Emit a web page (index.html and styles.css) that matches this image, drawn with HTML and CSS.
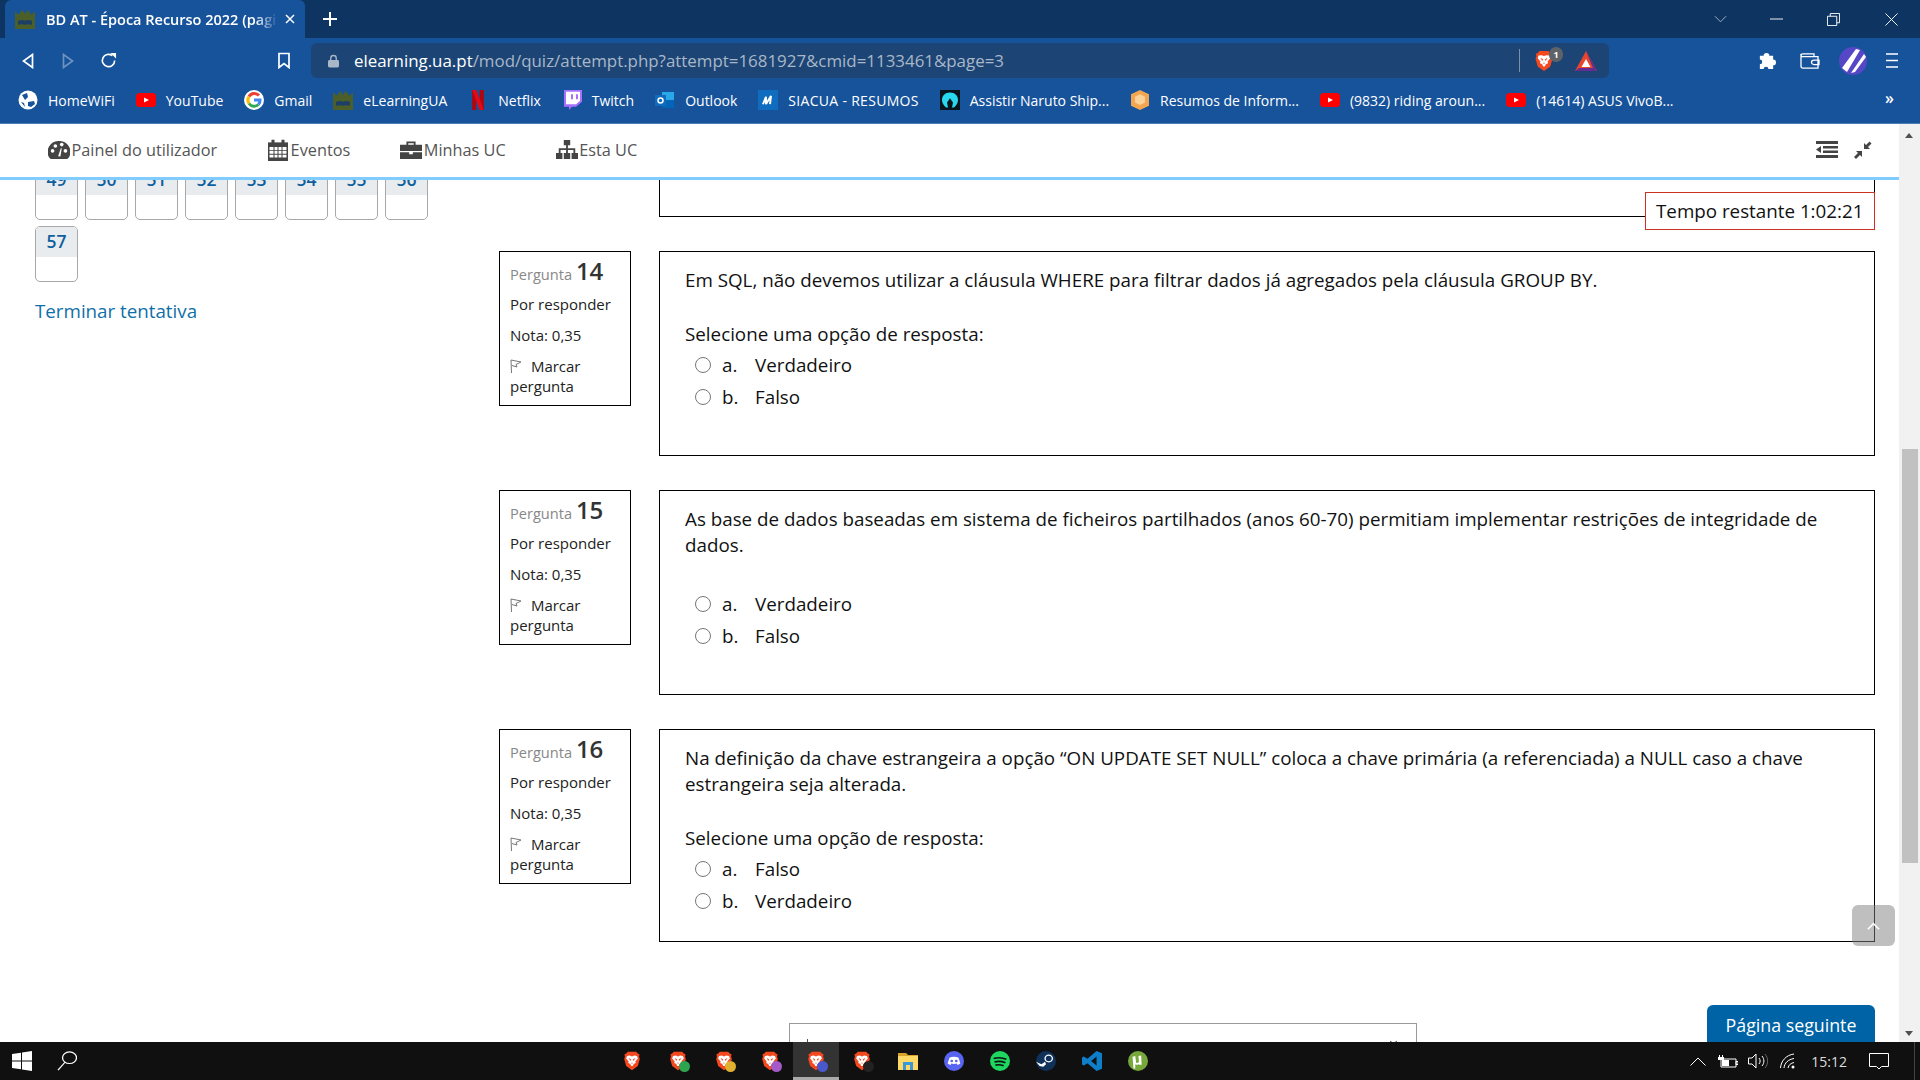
FILE: index.html
```html
<!DOCTYPE html>
<html lang="pt">

<head>
    <meta charset="UTF-8">
    <title>BD AT - Época Recurso 2022</title>
    <link rel="stylesheet" href="styles.css">
</head>

<body>
    <svg class="defs" width="0" height="0">
        <defs>
            <symbol id="brave" viewBox="0 0 20 24">
                <path fill="#f4481f" d="M5 1h10l2 2 2 1-.5 3 .9 2.500-2.400 8.500-7 5-7-5L.6 9.500 1.500 7 1 4l2-1z" />
                <path fill="#fff" d="M4 6l3.500-.5L10 6.500l2.500-1L16 6l1 3-3 3.500.5 2-2.500 1-1 2.500h-2l-1-2.500-2.500-1 .5-2L3 9z" />
                <path fill="#f4481f" d="M6 8.500l3 1.500-1 2zM14 8.500l-3 1.500 1 2zM9 14h2l-1 1.500z" />
            </symbol>
            <symbol id="yt" viewBox="0 0 20 14">
                <rect width="20" height="14" rx="3.500" fill="#f00" />
                <path fill="#fff" d="M8 4.500l5 2.500-5 2.500z" />
            </symbol>
            <symbol id="ua" viewBox="0 0 20 24" preserveAspectRatio="none">
                <path fill="#4d5f28" d="M0 24V3l4 4 3-6 3 5 3-5 3 6 4-4v21z" />
                <path fill="#1d3f66" d="M3 14c3-1 5-1 7 0 2-1 4-1 7 0v5c-3-1-5-1-7 0-2-1-4-1-7 0z" />
            </symbol>
            <symbol id="chevron-up" viewBox="0 0 16 10">
                <path fill="none" stroke="currentColor" stroke-width="2" d="M1 9l7-7 7 7" />
            </symbol>
        </defs>
    </svg>

    <div class="tabstrip">
        <div class="tab">
            <svg class="tab-icon"><use href="#ua" /></svg>
            <span class="tab-title">BD AT - Época Recurso 2022 (pagina 4 de 6)</span>
            <svg class="tab-close" viewBox="0 0 10 10"><path d="M1 1l8 8M9 1l-8 8" /></svg>
        </div>
        <svg class="tab-new" viewBox="0 0 14 14"><path d="M7 0v14M0 7h14" /></svg>
        <svg class="win-btn win-list" viewBox="0 0 14 8"><path d="M1 1l6 6 6-6" /></svg>
        <svg class="win-btn win-min" viewBox="0 0 14 2"><path d="M0 1h14" /></svg>
        <svg class="win-btn win-max" viewBox="0 0 14 14"><path d="M.5 3.500h10v10H.5zM3.500 3.500V.5h10v10h-3" /></svg>
        <svg class="win-btn win-close" viewBox="0 0 14 14"><path d="M.5.5l13 13M13.500.5l-13 13" /></svg>
    </div>

    <div class="toolbar">
        <svg class="tool tool-back" viewBox="0 0 12 16"><path d="M10.500 1.500v13L1.500 8z" /></svg>
        <svg class="tool tool-forward" viewBox="0 0 12 16"><path d="M1.500 1.500v13l9-6.500z" /></svg>
        <svg class="tool tool-reload" viewBox="0 0 18 18"><path d="M15.500 9A6.500 6.500 0 1 1 13 3.900" /><path class="solid" d="M11 1h6v6z" /></svg>
        <svg class="tool tool-mark" viewBox="0 0 12 16"><path d="M1 1h10v14l-5-4-5 4z" /></svg>
        <div class="urlbar">
            <svg class="lock" viewBox="0 0 12 14"><path d="M3 6V4a3 3 0 0 1 6 0v2" fill="none" stroke="#a9b7c8" stroke-width="1.500" /><rect y="6" width="12" height="8" rx="1.500" fill="#a9b7c8" /></svg>
            <span class="url"><b>elearning.ua.pt</b>/mod/quiz/attempt.php?attempt=1681927&amp;cmid=1133461&amp;page=3</span>
            <i class="url-sep"></i>
            <div class="shield">
                <svg class="shield-icon"><use href="#brave" /></svg>
                <span class="shield-badge">1</span>
            </div>
            <svg class="bat" viewBox="0 0 22 20"><path fill="#e8452c" d="M11 0l11 20H0z" /><path fill="#662d91" d="M0 20l4-3h14l4 3zM11 0l11 20-4-3z" /><path fill="#fff" d="M11 8l4.500 8h-9z" /></svg>
        </div>
        <svg class="ext-puzzle" viewBox="0 0 20 20"><path fill="#fff" d="M3 5h4a3 3 0 1 1 6 0h4v4a3 3 0 1 1 0 6v4h-5a2.500 2.500 0 1 0-5 0H3v-5a2.500 2.500 0 1 0 0-5z" /></svg>
        <svg class="tool ext-wallet" viewBox="0 0 20 18" preserveAspectRatio="none"><path d="M1 3a2 2 0 0 1 2-2h11v3M1 3v12a2 2 0 0 0 2 2h15V4H3a2 2 0 0 1-2-1zM19 8h-5a2 2 0 0 0 0 5h5z" /></svg>
        <svg class="avatar" viewBox="0 0 28 28"><circle cx="14" cy="14" r="14" fill="#5647c6" /><path fill="#fff" d="M3 21L17 2l4 1L8 25zM12 26L25 7l2 3-11 15z" /></svg>
        <svg class="tool ext-menu" viewBox="0 0 12 15" preserveAspectRatio="none"><path d="M0 1h12M0 7.500h12M0 14h12" /></svg>
    </div>

    <div class="bookmarks">
        <a class="bm"><svg class="bm-icon" viewBox="0 0 20 20"><circle cx="10" cy="10" r="9.500" fill="#fff" /><path fill="#16539b" d="M4 5l5-2 1 4-3 3zM10 12l6-1 1 3-4 3-3-1zM3 12l3 1 1 4z" /></svg>HomeWiFi</a>
        <a class="bm"><svg class="bm-icon"><use href="#yt" /></svg>YouTube</a>
        <a class="bm"><svg class="bm-icon" viewBox="0 0 20 20"><circle cx="10" cy="10" r="10" fill="#fff" /><path fill="none" stroke-width="3" stroke="#ea4335" d="M15 5.500A6.300 6.300 0 0 0 5 6.500" /><path fill="none" stroke-width="3" stroke="#fbbc05" d="M5 6.500a6.300 6.300 0 0 0 0 7" /><path fill="none" stroke-width="3" stroke="#34a853" d="M5 13.500a6.300 6.300 0 0 0 9.500 1" /><path fill="none" stroke-width="3" stroke="#4285f4" d="M14.500 14.500A6.300 6.300 0 0 0 16 10h-6" /></svg>Gmail</a>
        <a class="bm"><svg class="bm-icon"><use href="#ua" /></svg>eLearningUA</a>
        <a class="bm"><svg class="bm-icon" viewBox="0 0 20 24"><path fill="#b1060f" d="M3 0h5v24l-5 .5zM12 0h5v24h-5z" /><path fill="#e50914" d="M3 0h5l9 24h-5z" /></svg>Netflix</a>
        <a class="bm"><svg class="bm-icon" viewBox="0 0 20 24" preserveAspectRatio="none"><path fill="#a970ff" d="M2 0h18v14l-6 6h-4l-3 4v-4H2z" /><path fill="#fff" d="M4 2h14v11l-4 4H4z" /><path fill="#a970ff" d="M9 5h2v6H9zM14 5h2v6h-2z" /></svg>Twitch</a>
        <a class="bm"><svg class="bm-icon" viewBox="0 0 20 20"><path fill="#28a8ea" d="M7 2h12v16H7z" /><path fill="#0364b8" d="M7 10h12v8H7z" /><rect y="5" width="11" height="11" fill="#0f6cbd" /><circle cx="5.500" cy="10.500" r="2.500" fill="none" stroke="#fff" stroke-width="1.500" /></svg>Outlook</a>
        <a class="bm bm-wide"><svg class="bm-icon" viewBox="0 0 20 24" preserveAspectRatio="none"><rect width="20" height="24" fill="#0f6cbf" /><path fill="none" stroke="#fff" stroke-width="2" d="M5 17l3-9v9l5-10-1 10" /></svg>SIACUA - RESUMOS</a>
        <a class="bm"><svg class="bm-icon" viewBox="0 0 20 24" preserveAspectRatio="none"><rect width="20" height="24" fill="#08141c" /><path fill="#27d8ee" d="M10 3c5 0 8 4 8 9 0 4-2 7-4 9h-2l1-6-3-5-3 5 1 6H6c-2-2-4-5-4-9 0-5 3-9 8-9z" /></svg>Assistir Naruto Ship...</a>
        <a class="bm"><svg class="bm-icon" viewBox="0 0 20 24" preserveAspectRatio="none"><path fill="#f3a64f" d="M10 0l9 5v14l-9 5-9-5V5z" /><path fill="#fbd39a" d="M10 5l5 3v7l-5 3-5-3V8z" /></svg>Resumos de Inform...</a>
        <a class="bm"><svg class="bm-icon"><use href="#yt" /></svg>(9832) riding aroun...</a>
        <a class="bm"><svg class="bm-icon"><use href="#yt" /></svg>(14614) ASUS VivoB...</a>
        <span class="bm-more">»</span>
    </div>

    <div class="window">
        <div class="page">
            <nav class="topnav">
                <a class="nav-link">
                    <svg class="nav-icon icon-gauge" viewBox="0 0 24 20" preserveAspectRatio="none"><path fill="#444" d="M12 0a12 12 0 0 0-10.500 18.500L3 20h18l1.500-1.500A12 12 0 0 0 12 0z" /><g fill="#fff"><circle cx="5" cy="11" r="2" /><circle cx="8" cy="5.500" r="2" /><circle cx="15" cy="4" r="2" /><circle cx="19" cy="11" r="2" /><path d="M11 17l3-9 1 .3-1.500 9z" /></g></svg>
                    Painel do utilizador
                </a>
                <a class="nav-link">
                    <svg class="nav-icon" viewBox="0 0 22 26" preserveAspectRatio="none"><path fill="#444" d="M1 4h20v22H1z" /><path fill="#fff" d="M2.500 9.500h4v3.500h-4zM7.500 9.500h3v3.500h-3zM11.500 9.500h3v3.500h-3zM15.500 9.500h4v3.500h-4zM2.500 14h4v3.500h-4zM7.500 14h3v3.500h-3zM11.500 14h3v3.500h-3zM15.500 14h4v3.500h-4zM2.500 18.500h4v3.500h-4zM7.500 18.500h3v3.500h-3zM11.500 18.500h3v3.500h-3zM15.500 18.500h4v3.500h-4z" /><path stroke="#444" stroke-width="3" d="M6 1v6M16 1v6" /></svg>
                    Eventos
                </a>
                <a class="nav-link">
                    <svg class="nav-icon icon-case" viewBox="0 0 24 20" preserveAspectRatio="none"><path fill="#444" d="M0 5h24v6.500H0zM0 13h10v2h4v-2h10v7H0zM7 1.500h10V5h-2V3.500H9V5H7z" /></svg>
                    Minhas UC
                </a>
                <a class="nav-link">
                    <svg class="nav-icon icon-tree" viewBox="0 0 24 22" preserveAspectRatio="none"><path fill="#444" d="M8.500 0h7v6h-7zM0 15h7v7H0zM8.500 15h7v7h-7zM17 15h7v7h-7zM11 6h2v3.500h8V15h-2v-3.500h-6V15h-2v-3.500H5V15H3V9.500h8z" /></svg>
                    Esta UC
                </a>
                <svg class="nav-tool nav-outdent" viewBox="0 0 22 17"><path fill="#444" d="M0 0h22v3H0zM7 5h15v2.500H7zM7 9.500h15V12H7zM0 14h22v3H0zM5 5v7L0 8.500z" /></svg>
                <svg class="nav-tool nav-compress" viewBox="0 0 18 18"><path fill="#444" d="M10 8V2l2 2 3.500-3.500L17.500 2.500 14 6l2 2zM8 10v6l-2-2-4 4-2-2 4-4-2-2z" /></svg>
            </nav>

            <div class="main">
                <aside class="sidebar">
                    <div class="qnbuttons">
                        <div class="qn"><span>49</span></div>
                        <div class="qn"><span>50</span></div>
                        <div class="qn"><span>51</span></div>
                        <div class="qn"><span>52</span></div>
                        <div class="qn"><span>53</span></div>
                        <div class="qn"><span>54</span></div>
                        <div class="qn"><span>55</span></div>
                        <div class="qn"><span>56</span></div>
                        <div class="qn"><span>57</span></div>
                    </div>
                    <a class="finish">Terminar tentativa</a>
                </aside>

                <div class="questions">
                    <div class="que que-prev"><div class="que-body"></div></div>

                    <div class="que">
                        <div class="que-info">
                            <div class="que-no">Pergunta <b>14</b></div>
                            <div class="que-line">Por responder</div>
                            <div class="que-line">Nota: 0,35</div>
                            <div class="que-flag">
                                <svg class="flag" viewBox="0 0 12 14"><path d="M1.500 14L1 1l10 2-5 2.500L7 8 2 6.500" /></svg>
                                Marcar pergunta
                            </div>
                        </div>
                        <div class="que-body">
                            <p class="que-text">Em SQL, não devemos utilizar a cláusula WHERE para filtrar dados já agregados pela cláusula GROUP BY.</p>
                            <p class="prompt">Selecione uma opção de resposta:</p>
                            <label class="answer"><i class="radio"></i><span class="letter">a.</span>Verdadeiro</label>
                            <label class="answer"><i class="radio"></i><span class="letter">b.</span>Falso</label>
                        </div>
                    </div>

                    <div class="que">
                        <div class="que-info">
                            <div class="que-no">Pergunta <b>15</b></div>
                            <div class="que-line">Por responder</div>
                            <div class="que-line">Nota: 0,35</div>
                            <div class="que-flag">
                                <svg class="flag" viewBox="0 0 12 14"><path d="M1.500 14L1 1l10 2-5 2.500L7 8 2 6.500" /></svg>
                                Marcar pergunta
                            </div>
                        </div>
                        <div class="que-body">
                            <p class="que-text">As base de dados baseadas em sistema de ficheiros partilhados (anos 60-70) permitiam implementar restrições de integridade de dados.</p>
                            <p class="prompt prompt-empty"></p>
                            <label class="answer"><i class="radio"></i><span class="letter">a.</span>Verdadeiro</label>
                            <label class="answer"><i class="radio"></i><span class="letter">b.</span>Falso</label>
                        </div>
                    </div>

                    <div class="que">
                        <div class="que-info">
                            <div class="que-no">Pergunta <b>16</b></div>
                            <div class="que-line">Por responder</div>
                            <div class="que-line">Nota: 0,35</div>
                            <div class="que-flag">
                                <svg class="flag" viewBox="0 0 12 14"><path d="M1.500 14L1 1l10 2-5 2.500L7 8 2 6.500" /></svg>
                                Marcar pergunta
                            </div>
                        </div>
                        <div class="que-body">
                            <p class="que-text">Na definição da chave estrangeira a opção “ON UPDATE SET NULL” coloca a chave primária (a referenciada) a NULL caso a chave estrangeira seja alterada.</p>
                            <p class="prompt">Selecione uma opção de resposta:</p>
                            <label class="answer"><i class="radio"></i><span class="letter">a.</span>Falso</label>
                            <label class="answer"><i class="radio"></i><span class="letter">b.</span>Verdadeiro</label>
                        </div>
                    </div>

                    <div class="page-foot">
                        <div class="jump"><i class="jump-tick"></i><i class="jump-arrow"></i></div>
                        <a class="next-btn">Página seguinte</a>
                    </div>
                </div>

                <div class="timer">Tempo restante 1:02:21</div>
                <a class="to-top"><svg class="to-top-icon"><use href="#chevron-up" /></svg></a>
            </div>
        </div>

        <div class="scrollbar">
            <i class="arrow-up"></i>
            <i class="thumb"></i>
            <i class="arrow-down"></i>
        </div>
    </div>

    <div class="taskbar">
        <svg class="start" viewBox="0 0 20 20"><path fill="#fff" d="M0 3l9-1.300V9.500H0zM10 1.500L20 0v9.500H10zM0 10.500h9v7.800L0 17zM10 10.500h10V20l-10-1.500z" /></svg>
        <svg class="search" viewBox="0 0 20 24" preserveAspectRatio="none"><circle cx="12.500" cy="8" r="7" fill="none" stroke="#fff" stroke-width="1.300" /><path stroke="#fff" stroke-width="1.300" d="M8 13.500L1 23" /></svg>

        <div class="apps">
            <div class="app"><svg class="app-brave"><use href="#brave" /></svg></div>
            <div class="app"><svg class="app-brave"><use href="#brave" /></svg><i class="app-badge badge-green"></i></div>
            <div class="app"><svg class="app-brave"><use href="#brave" /></svg><i class="app-badge badge-yellow"></i></div>
            <div class="app"><svg class="app-brave"><use href="#brave" /></svg><i class="app-badge badge-purple"></i></div>
            <div class="app app-active"><svg class="app-brave"><use href="#brave" /></svg><i class="app-badge badge-blue"></i></div>
            <div class="app"><svg class="app-brave"><use href="#brave" /></svg><i class="app-badge badge-dark"></i></div>
            <div class="app"><svg class="app-icon" viewBox="0 0 20 20"><path fill="#d9a22b" d="M0 2h8l2 2h10v3H0z" /><path fill="#ffd966" d="M0 5h20v14H0z" /><path fill="#3b97d8" d="M5 11h10v8h-3v-5H8v5H5z" /></svg></div>
            <div class="app"><svg class="app-icon" viewBox="0 0 22 24" preserveAspectRatio="none"><ellipse cx="11" cy="12" rx="11" ry="12" fill="#5865f2" /><path fill="#fff" d="M6 8c3-1.500 7-1.500 10 0l2 7c-1 1-2.500 1.500-3.500 1.500L14 15c-2 .6-4 .6-6 0l-.5 1.500C6.500 16.500 5 16 4 15z" /><circle cx="8.500" cy="12" r="1.500" fill="#5865f2" /><circle cx="13.500" cy="12" r="1.500" fill="#5865f2" /></svg></div>
            <div class="app"><svg class="app-icon" viewBox="0 0 22 24" preserveAspectRatio="none"><ellipse cx="11" cy="12" rx="11" ry="12" fill="#1ed760" /><path fill="none" stroke="#111" stroke-width="2" d="M4 9c5-1.500 10-1 14 1M5 13c4-1 8-.8 12 1M6 17c3-.8 6-.6 9 .8" /></svg></div>
            <div class="app"><svg class="app-icon" viewBox="0 0 22 24" preserveAspectRatio="none"><ellipse cx="11" cy="12" rx="11" ry="12" fill="#10315a" /><circle cx="14" cy="9" r="4" fill="none" stroke="#fff" stroke-width="1.500" /><path fill="#fff" d="M0 13l6 3 4-3 1 3-3 3-4-1z" /></svg></div>
            <div class="app"><svg class="app-icon" viewBox="0 0 22 26" preserveAspectRatio="none"><path fill="#0e7ecb" d="M16 0l6 3v20l-6 3L6 16l-4 3-2-1.500V8.500L2 7l4 3z" /><path fill="#111" d="M16 7l-6 6 6 6z" /></svg></div>
            <div class="app"><svg class="app-icon" viewBox="0 0 22 24" preserveAspectRatio="none"><ellipse cx="11" cy="12" rx="11" ry="12" fill="#76a83c" /><path fill="#fff" d="M5 7l3-1 1 8c1 1 3 0 3-1l-.5-7 3-.5.5 11h-3v-1c-1 1-3 1.500-4 .5L8 21H6z" /></svg></div>
        </div>

        <div class="tray">
            <svg class="tray-icon tray-chevron" viewBox="0 0 16 9"><path d="M.5 8.500L8 1l7.500 7.500" /></svg>
            <svg class="tray-icon tray-battery" viewBox="0 0 20 13"><path d="M3 4h15v8H3zM18 6.500h2v3h-2z" /><path class="solid" d="M4 5h7v6H4zM0 2h6v3H0zM1 0h1v2H1zM4 0h1v2H4z" /></svg>
            <svg class="tray-icon tray-volume" viewBox="0 0 20 16"><path d="M.5 5h3.500L8 1v14l-4-4H.5zM11 5c1.500 2 1.500 4 0 6M14 3c2.500 3 2.500 7 0 10" /><path class="dim" d="M17 1c3.500 4 3.500 10 0 14" /></svg>
            <svg class="tray-icon tray-wifi" viewBox="0 0 16 16"><path d="M.5 15C1 8 6 2 14 1M4 15c.5-5 4-8.500 10-9.500M8 15c.5-3 3-5 6-5.500" /><circle class="solid" cx="13" cy="14" r="1.500" /></svg>
            <span class="clock">15:12</span>
            <svg class="tray-icon tray-notify" viewBox="0 0 20 17"><path d="M.5.5h19v13h-7L10 16l-2.500-2.500h-7z" /></svg>
            <i class="show-desktop"></i>
        </div>
    </div>
</body>

</html>
```
FILE: styles.css
```css
* {
    box-sizing: border-box;
    margin: 0;
    padding: 0;
}

html,
body {
    height: 100%;
    overflow: hidden;
}

body {
    display: flex;
    flex-direction: column;
    width: 1920px;
    height: 1080px;
    background: #fff;
    font-family: "Open Sans", sans-serif;
    color: #111;
}

.defs {
    position: absolute;
}

svg {
    display: block;
    flex: none;
}

i {
    display: block;
    font-style: normal;
}

/* browser chrome */

.tabstrip {
    display: flex;
    align-items: flex-start;
    height: 38px;
    padding-left: 5px;
    background: #0e3562;
}

.tab {
    display: flex;
    align-items: center;
    width: 300px;
    height: 38px;
    padding: 0 10px;
    background: #16539b;
    border-radius: 6px 6px 0 0;
    color: #fff;
}

.tab-icon {
    width: 20px;
    height: 20px;
}

.tab-title {
    width: 232px;
    margin-left: 11px;
    overflow: hidden;
    white-space: nowrap;
    font-size: 14.500px;
    font-weight: 600;
    -webkit-mask-image: linear-gradient(to right, #000 90%, transparent);
    mask-image: linear-gradient(to right, #000 90%, transparent);
}

.tab-close {
    width: 10px;
    height: 10px;
    margin-left: 7px;
    fill: none;
    stroke: #fff;
    stroke-width: 1.500;
}

.tab-new {
    width: 14px;
    height: 14px;
    margin: 12px 0 0 18px;
    fill: none;
    stroke: #fff;
    stroke-width: 2;
}

.win-btn {
    fill: none;
    stroke: #fff;
    stroke-width: 1;
}

.win-list {
    width: 13px;
    height: 8px;
    margin: 15px 0 0 1376.500px;
    stroke: #a9b7c8;
}

.win-min {
    width: 13px;
    height: 2px;
    margin: 18px 0 0 43px;
}

.win-max {
    width: 13px;
    height: 13px;
    margin: 13px 0 0 44px;
}

.win-close {
    width: 13px;
    height: 13px;
    margin: 13px 0 0 45px;
}

.toolbar {
    display: flex;
    align-items: center;
    height: 45px;
    padding: 5px 0 5px 22px;
    background: #16539b;
}

.tool {
    fill: none;
    stroke: #fff;
    stroke-width: 1.700;
}

.tool .solid {
    fill: #fff;
    stroke: none;
}

.tool-back,
.tool-forward {
    width: 12px;
    height: 16px;
}

.tool-forward {
    margin-left: 28px;
    stroke: #6e93bf;
}

.tool-reload {
    width: 17px;
    height: 17px;
    margin-left: 25.500px;
}

.tool-mark {
    width: 12px;
    height: 17px;
    margin-left: 161.500px;
}

.urlbar {
    display: flex;
    align-items: center;
    flex: none;
    width: 1298px;
    height: 35px;
    margin-left: 21px;
    padding-left: 17px;
    background: #1c4575;
    border-radius: 6px;
}

.lock {
    width: 11px;
    height: 14px;
}

.url {
    width: 1163px;
    margin-left: 15px;
    white-space: nowrap;
    font-size: 16.900px;
    color: #a9b7c8;
}

.url b {
    font-weight: 400;
    color: #fff;
}

.url-sep {
    width: 1px;
    height: 23px;
    margin-left: 2px;
    background: #7c8fa8;
}

.shield {
    position: relative;
    margin-left: 15px;
}

.shield-icon {
    width: 18px;
    height: 22px;
}

.shield-badge {
    position: absolute;
    top: -3px;
    left: 14px;
    width: 14px;
    height: 15px;
    border-radius: 7px;
    background: #5f6368;
    color: #fff;
    font-size: 9px;
    font-weight: 700;
    line-height: 15px;
    text-align: center;
}

.bat {
    width: 22px;
    height: 20px;
    margin-left: 22px;
}

.ext-puzzle {
    width: 19px;
    height: 19px;
    margin-left: 147.500px;
}

.ext-wallet {
    width: 20px;
    height: 16px;
    margin-left: 24.500px;
    stroke-width: 1.300;
}

.avatar {
    width: 28px;
    height: 28px;
    margin-left: 19px;
}

.ext-menu {
    width: 12px;
    height: 15px;
    margin-left: 19px;
}

.bookmarks {
    display: flex;
    align-items: center;
    gap: 21px;
    height: 41px;
    padding: 0 0 6px 18px;
    background: #16539b;
    border-bottom: 1px solid #4e7cb3;
    color: #fff;
    font-size: 14px;
    white-space: nowrap;
}

.bm {
    display: flex;
    align-items: center;
    gap: 10px;
}

.bm-wide {
    letter-spacing: 0.3px;
}

.bm-icon {
    width: 20px;
    height: 20px;
}

.bm-more {
    position: absolute;
    left: 1885px;
    top: 87px;
    font-size: 16px;
    font-weight: 600;
}

/* page */

.window {
    display: flex;
    flex: 1;
    min-height: 0;
}

.page {
    display: flex;
    flex-direction: column;
    flex: 1;
    min-width: 0;
}

.topnav {
    display: flex;
    align-items: center;
    gap: 50px;
    height: 56px;
    padding: 0 0 2px 48px;
    background: #fff;
    border-bottom: 3px solid #80ccff;
    font-size: 16.300px;
    color: #555;
}

.nav-link {
    display: flex;
    align-items: center;
    gap: 1.500px;
}

.nav-icon {
    width: 22px;
    height: 22px;
}

.icon-gauge {
    height: 18px;
}

.icon-case,
.icon-tree {
    height: 19px;
}

.nav-tool {
    flex: none;
}

.nav-outdent {
    width: 22px;
    height: 17px;
    margin-left: auto;
}

.nav-compress {
    width: 18px;
    height: 18px;
    margin: 0 27px 0 -34px;
}

.main {
    position: relative;
    display: flex;
    flex: 1;
    min-height: 0;
    overflow: hidden;
}

.sidebar {
    flex: none;
    width: 499px;
    padding-left: 35px;
}

.qnbuttons {
    display: grid;
    grid-template-columns: repeat(8, 43px);
    gap: 6px 7px;
    margin-top: -16px;
}

.qn {
    height: 56px;
    background: #fff;
    border: 1px solid #a8a8a8;
    border-radius: 5px;
    overflow: hidden;
}

.qn span {
    display: block;
    height: 30px;
    background: #e9ecef;
    color: #0f5f9e;
    font-size: 17.500px;
    font-weight: 600;
    line-height: 28px;
    text-align: center;
}

.finish {
    display: block;
    margin-top: 16px;
    font-size: 18.750px;
    line-height: 26px;
    color: #0f6fa8;
}

.questions {
    flex: none;
    width: 1376px;
    margin-top: -23px;
}

.que {
    display: flex;
    align-items: flex-start;
    gap: 28px;
    margin-bottom: 34px;
}

.que-prev {
    justify-content: flex-end;
    height: 60px;
}

.que-prev .que-body {
    height: 60px;
    min-height: 0;
}

.que-info {
    flex: none;
    width: 132px;
    height: 155px;
    padding: 6px 8px 0 10px;
    border: 1px solid #000;
    font-size: 15px;
    line-height: 20px;
    color: #222;
}

.que-no {
    height: 25px;
    font-size: 14.600px;
    color: #888;
}

.que-no b {
    font-size: 24px;
    font-weight: 600;
    line-height: 26px;
    color: #333;
}

.que-line {
    margin-top: 11px;
}

.que-flag {
    margin-top: 11px;
}

.flag {
    display: inline-block;
    width: 12px;
    height: 14px;
    margin-right: 5px;
    vertical-align: -1px;
    fill: none;
    stroke: #777;
    stroke-width: 1;
}

.que-body {
    flex: none;
    width: 1216px;
    min-height: 205px;
    padding: 15px 25px 24px;
    border: 1px solid #000;
    font-size: 18.800px;
    line-height: 26px;
}

.que-text {
    margin-bottom: 28px;
}

.prompt {
    height: 26px;
    margin-bottom: 2px;
}

.prompt-empty {
    height: 2px;
    margin-bottom: 0;
}

.answer {
    display: flex;
    align-items: center;
    height: 32px;
    padding-left: 10px;
}

.radio {
    width: 16px;
    height: 16px;
    margin-right: 11px;
    background: #fff;
    border: 1px solid #767676;
    border-radius: 50%;
}

.letter {
    width: 33px;
}

.page-foot {
    display: flex;
    align-items: flex-start;
    margin-top: 63px;
    padding-left: 290px;
}

.jump {
    position: relative;
    width: 628px;
    height: 40px;
    margin-top: 18px;
    background: #fff;
    border: 1px solid #999;
}

.jump-tick {
    position: absolute;
    top: 15px;
    left: 17px;
    width: 1px;
    height: 10px;
    background: #555;
}

.jump-arrow {
    position: absolute;
    top: 15px;
    right: 20px;
    width: 5px;
    height: 5px;
    border-top: 1px solid #444;
    border-left: 1px solid #444;
    transform: rotate(-135deg);
}

.next-btn {
    width: 168px;
    height: 48px;
    margin-left: auto;
    padding-top: 7px;
    background: #0063a5;
    border-radius: 6px;
    color: #fff;
    font-size: 17.800px;
    line-height: 26px;
    text-align: center;
}

.timer {
    position: absolute;
    top: 12px;
    left: 1645px;
    width: 230px;
    height: 38px;
    padding-left: 10px;
    background: #fff;
    border: 1px solid #ca3120;
    font-size: 18.800px;
    line-height: 36px;
    color: #111;
}

.to-top {
    position: absolute;
    top: 725px;
    left: 1852px;
    display: flex;
    align-items: center;
    justify-content: center;
    width: 43px;
    height: 41px;
    background: rgba(128, 128, 128, 0.5);
    border-radius: 6px;
    color: #fff;
}

.to-top-icon {
    width: 13px;
    height: 8px;
}

.scrollbar {
    position: relative;
    flex: none;
    width: 21px;
    background: #f1f1f1;
}

.arrow-up,
.arrow-down {
    position: absolute;
    left: 6px;
    width: 0;
    height: 0;
    border-left: 4.500px solid transparent;
    border-right: 4.500px solid transparent;
}

.arrow-up {
    top: 9px;
    border-bottom: 5px solid #505050;
}

.arrow-down {
    bottom: 6px;
    border-top: 5px solid #505050;
}

.thumb {
    position: absolute;
    top: 325px;
    left: 3px;
    width: 16px;
    height: 414px;
    background: #c1c1c1;
}

/* taskbar */

.taskbar {
    position: relative;
    display: flex;
    align-items: center;
    flex: none;
    height: 38px;
    padding-left: 12px;
    background: #101010;
}

.start {
    width: 20px;
    height: 20px;
}

.search {
    width: 20px;
    height: 20px;
    margin-left: 25px;
}

.apps {
    display: flex;
    margin-left: 532px;
}

.app {
    position: relative;
    display: flex;
    align-items: center;
    justify-content: center;
    width: 46px;
    height: 38px;
}

.app-active {
    background: #333;
    border-bottom: 3px solid #aaa;
    padding-top: 3px;
}

.app-brave {
    width: 20px;
    height: 20px;
}

.app-icon {
    width: 20px;
    height: 20px;
}

.app-badge {
    position: absolute;
    top: 19px;
    left: 24px;
    width: 11px;
    height: 11px;
    border-radius: 50%;
}

.badge-green {
    background: #2ea44f;
}

.badge-yellow {
    background: #e0b030;
}

.badge-purple {
    background: #a45ac8;
}

.badge-blue {
    background: #4a58cc;
}

.badge-dark {
    background: #222;
}

.tray {
    display: flex;
    align-items: center;
    margin-left: auto;
    color: #fff;
}

.tray-icon {
    fill: none;
    stroke: #fff;
    stroke-width: 1;
}

.tray-icon .solid {
    fill: #fff;
    stroke: none;
}

.tray-icon .dim {
    stroke: #666;
}

.tray-chevron {
    width: 16px;
    height: 9px;
}

.tray-battery {
    width: 20px;
    height: 13px;
    margin-left: 12px;
}

.tray-volume {
    width: 20px;
    height: 16px;
    margin-left: 10px;
}

.tray-wifi {
    width: 16px;
    height: 16px;
    margin-left: 12px;
}

.clock {
    margin-left: 15px;
    font-size: 14px;
    color: #ddd;
}

.tray-notify {
    width: 20px;
    height: 17px;
    margin-left: 22px;
}

.show-desktop {
    width: 1px;
    height: 38px;
    margin: 0 5px 0 25px;
    background: #444;
}
```
